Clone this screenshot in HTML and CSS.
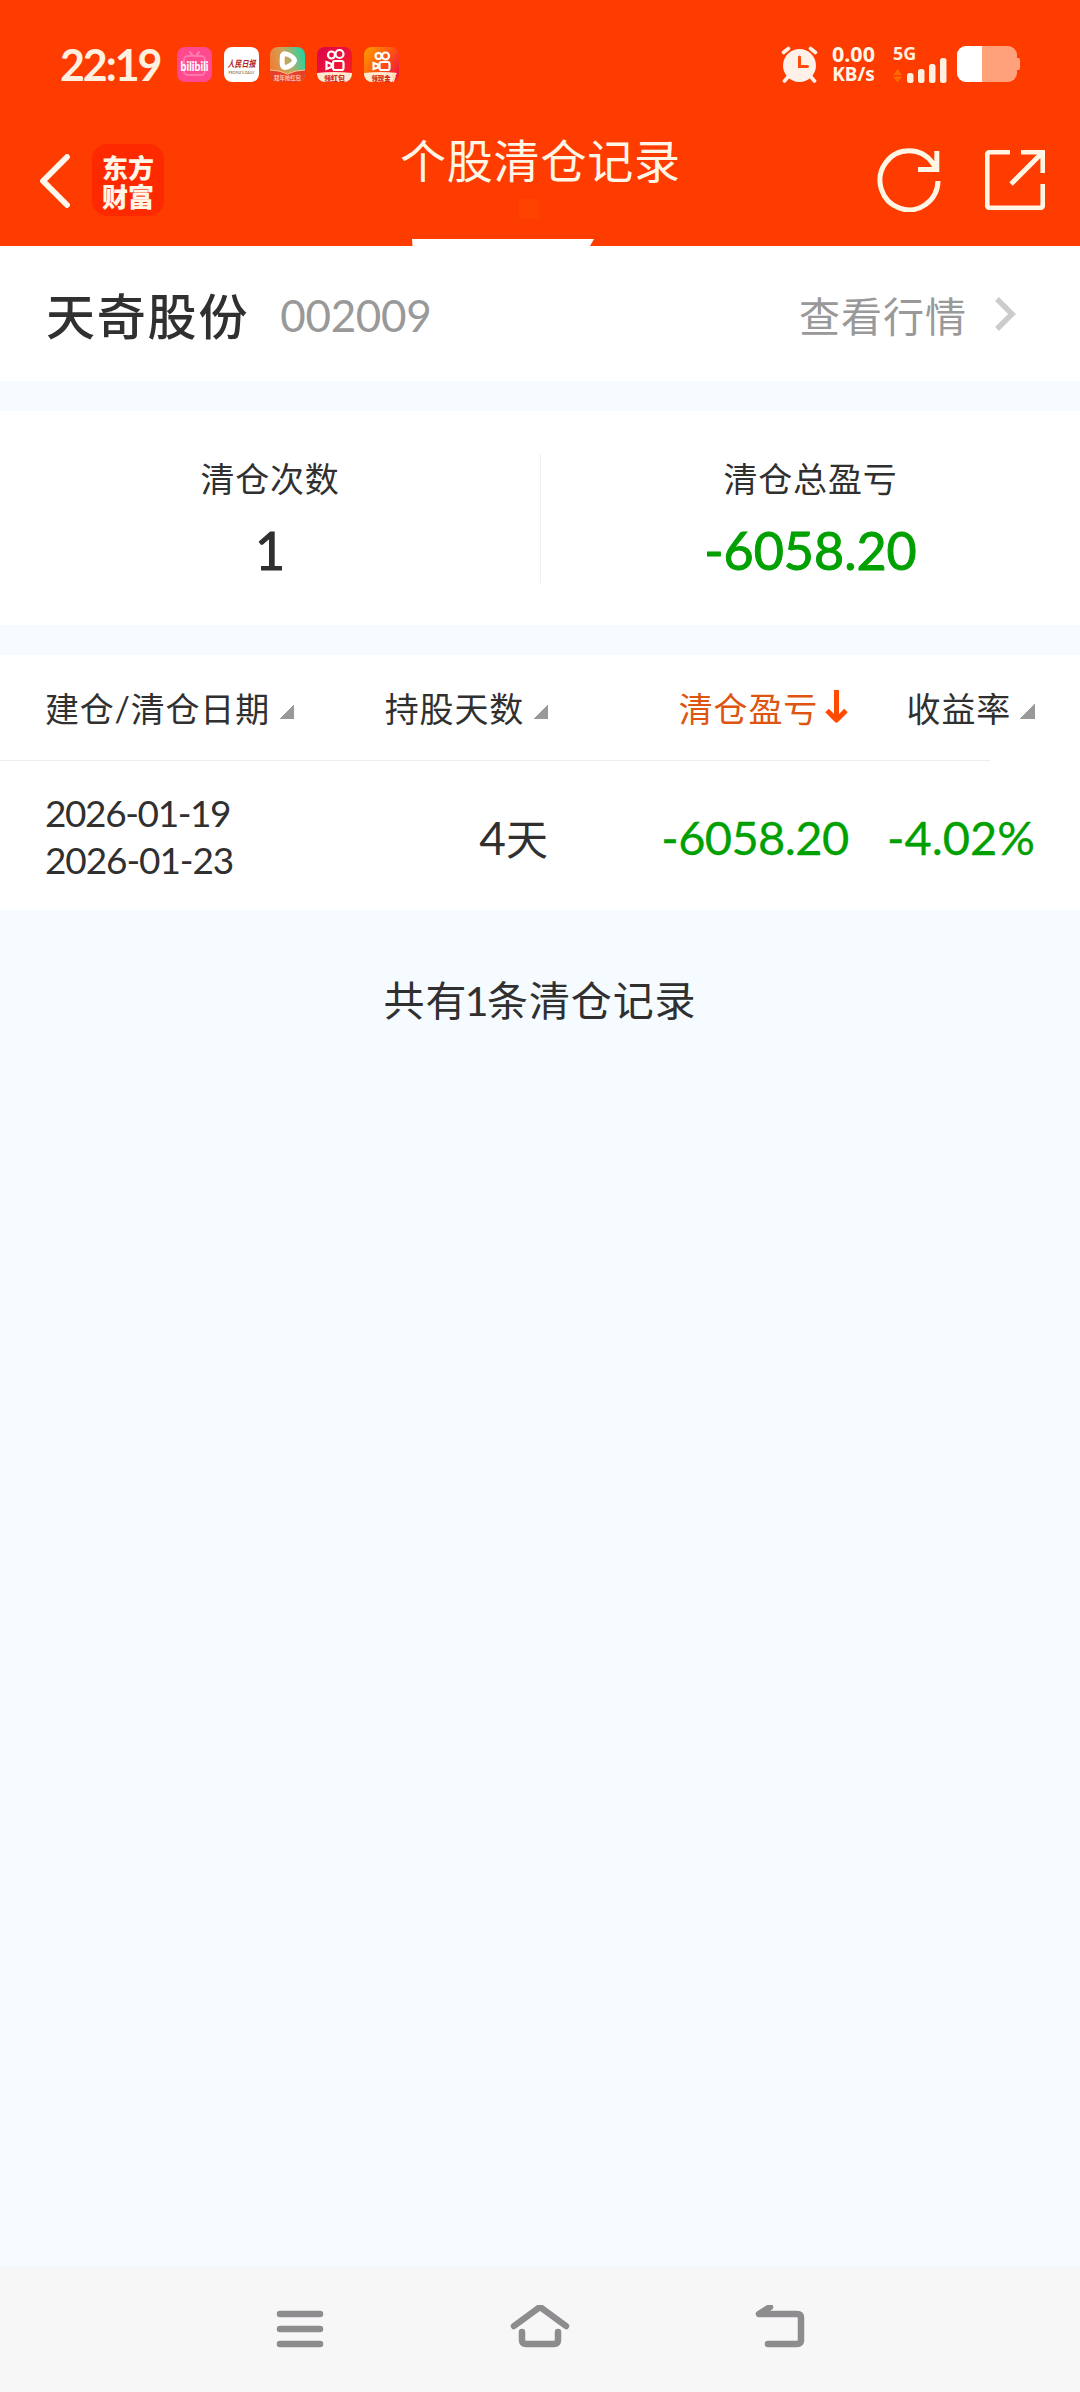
FILE: index.html
```html
<!DOCTYPE html>
<html lang="zh-CN">
<head>
<meta charset="utf-8">
<title>个股清仓记录</title>
<link rel="stylesheet" href="styles.css">
</head>
<body>
<div class="screen">
  <header class="top">
    <div class="status">
      <span class="clock">22:19</span>
      <div class="apps">
        <svg class="app" viewBox="0 0 35 35">
          <rect width="35" height="35" rx="8" fill="#ff4a90"/>
          <path d="M13 5l3 4M22 5l-3 4" stroke="#ff86b4" stroke-width="2" stroke-linecap="round"/>
          <rect x="7" y="9" width="21" height="19" rx="4" fill="none" stroke="#ff78ac" stroke-width="2"/>
          <text x="17.500" y="23.500" class="bili" textLength="28" lengthAdjust="spacingAndGlyphs">bilibili</text>
        </svg>
        <svg class="app" viewBox="0 0 35 35">
          <rect width="35" height="35" rx="8" fill="#fff"/>
          <text x="17.500" y="20" class="brush" textLength="28" lengthAdjust="spacingAndGlyphs">人民日报</text>
          <text x="17.500" y="26.500" class="brush-sub" textLength="26" lengthAdjust="spacingAndGlyphs">PEOPLE'S DAILY</text>
        </svg>
        <svg class="app" viewBox="0 0 35 35">
          <defs><linearGradient id="g1" x1="0" y1=".6" x2="1" y2=".3"><stop offset="0" stop-color="#f47a32"/><stop offset=".5" stop-color="#c5a860"/><stop offset="1" stop-color="#25d3a4"/></linearGradient></defs>
          <rect width="35" height="35" rx="8" fill="url(#g1)"/>
          <path d="M0 23q9 0 17.500 4Q26 23 35 23v4a8 8 0 0 1-8 8H8a8 8 0 0 1-8-8z" fill="#e5402b"/>
          <path d="M0 23q9 0 17.500 4Q26 23 35 23" fill="none" stroke="#ffc78c"/>
          <path d="M12.500 8.500q1-2.500 4-1.500 7 2.500 8 6 0 3-5 6-5 2.500-6.500.5-1.500-3-.5-11z" fill="none" stroke="#fff" stroke-width="5" stroke-linejoin="round"/>
          <text x="17.500" y="33" class="tag tag-pale" textLength="27" lengthAdjust="spacingAndGlyphs">拜年抢红包</text>
        </svg>
        <svg class="app" viewBox="0 0 35 35">
          <defs><linearGradient id="g2" x1="0" y1="0" x2="1" y2="1"><stop offset="0" stop-color="#d8064c"/><stop offset="1" stop-color="#ff2025"/></linearGradient></defs>
          <rect width="35" height="35" rx="8" fill="url(#g2)"/>
          <path d="M0 26q17-2 35 0v1a8 8 0 0 1-8 8H8a8 8 0 0 1-8-8z" fill="#ffe9cf"/>
          <g fill="none" stroke="#fff" stroke-width="2.200"><circle cx="14.500" cy="8" r="3.500"/><circle cx="22.500" cy="7" r="4"/><rect x="16" y="14" width="10.500" height="9" rx="2"/><path d="M9.500 15l5 2v3l-5 2z"/></g>
          <text x="17.500" y="33.500" class="tag" textLength="21" lengthAdjust="spacingAndGlyphs">领红包</text>
        </svg>
        <svg class="app" viewBox="0 0 35 35">
          <defs><linearGradient id="g3" x1="0" y1="0" x2="1" y2=".7"><stop offset="0" stop-color="#ffa000"/><stop offset=".6" stop-color="#ff5212"/><stop offset="1" stop-color="#ee1b3a"/></linearGradient></defs>
          <rect width="35" height="35" rx="8" fill="url(#g3)"/>
          <path d="M0 26q17-2 33 0l-5 9H8a8 8 0 0 1-8-8z" fill="#ffe9cf"/>
          <path d="M31 26l-3 4h3l-2 5" fill="none" stroke="#ffd9a0" stroke-width="1.500"/>
          <g fill="none" stroke="#fff" stroke-width="2.200"><circle cx="14.500" cy="9" r="3"/><circle cx="21.500" cy="9" r="3.500"/><rect x="15.500" y="15" width="10" height="8" rx="2"/><path d="M9.500 16l4.500 1.500v3L9.500 22z"/></g>
          <text x="17" y="33.500" class="tag" textLength="19" lengthAdjust="spacingAndGlyphs">领现金</text>
        </svg>
      </div>
      <svg class="alarm" viewBox="0 0 37 37">
        <g fill="none" stroke="#fff0e8" stroke-width="3.600" stroke-linecap="round"><path d="M2.500 6.500l5-4M34.500 6.500l-5-4M7 31l-3.500 4M30 31l3.500 4"/></g>
        <circle cx="18.500" cy="19.500" r="16.500" fill="#fff0e8"/>
        <path d="M18.500 11v9.500h8" fill="none" stroke="#ff4a0c" stroke-width="3" stroke-linecap="round"/>
      </svg>
      <div class="speed"><span>0.00</span><span class="unit">KB/s</span></div>
      <div class="network">
        <span>5G</span>
        <svg viewBox="0 0 55 26" width="55" height="26">
          <path d="M0 18l4.500-6 4.500 6zM0 19.500l4.500 6 4.500-6z" fill="#ff6a00"/>
          <g fill="#fff0e2"><rect x="14" y="16" width="6.500" height="10" rx="2.500"/><rect x="25" y="12" width="6.500" height="14" rx="2.500"/><rect x="36" y="7" width="6.500" height="19" rx="2.500"/><rect x="47" y="1" width="6.500" height="25" rx="2.500"/></g>
        </svg>
      </div>
      <svg class="battery" viewBox="0 0 63 36">
        <rect width="60" height="36" rx="9" fill="#ffa27b"/><path d="M60 12h1.500q1.500 0 1.500 2v8q0 2-1.500 2H60z" fill="#ffa27b"/>
        <path d="M9 0h16v36H9a9 9 0 0 1-9-9V9a9 9 0 0 1 9-9z" fill="#fff"/>
      </svg>
    </div>
    <div class="nav">
      <svg class="back" viewBox="0 0 30 54"><path d="M27 3L3 27l24 24" fill="none" stroke="#fff8ee" stroke-width="5.800" stroke-linecap="round" stroke-linejoin="round"/></svg>
      <div class="logo"><span>东方</span><span>财富</span></div>
      <h1 class="title">个股清仓记录<i class="spot"></i><svg class="tab" viewBox="0 0 182 7"><path d="M0 0h182l-4 7H.5z" fill="#fff"/></svg></h1>
      <svg class="refresh" viewBox="0 0 64 64"><path d="M61 33A29 29.500 0 1 1 55.500 15L60 21.500M59.800 3v18.500H41" fill="none" stroke="#fff6e6" stroke-width="5"/></svg>
      <svg class="export" viewBox="0 0 60 60"><g fill="none" stroke="#fff6e6" stroke-width="4.800"><path d="M25 2.200H5q-2.800 0-2.800 2.800v50q0 2.800 2.800 2.800h50q2.800 0 2.800-2.800V34"/><path d="M36 2.200h21.800V23M57 3L26 34"/></g></svg>
    </div>
  </header>

  <section class="stock">
    <span class="name">天奇股份</span><span class="code">002009</span>
    <span class="quote">查看行情</span>
    <svg class="more" viewBox="0 0 21 34"><path d="M2 2l15 15L2 32" fill="none" stroke="#ccc" stroke-width="5.500"/></svg>
  </section>

  <section class="summary">
    <div class="cell"><span class="label">清仓次数</span><span class="value">1</span></div>
    <div class="cell split"><span class="label">清仓总盈亏</span><span class="value total">-6058.20</span></div>
  </section>

  <section class="table">
    <div class="grid head">
      <span class="sort first">建仓/清仓日期<i class="tri"></i></span>
      <span class="sort">持股天数<i class="tri"></i></span>
      <span class="sort active">清仓盈亏<svg class="down" viewBox="0 0 23 34"><path d="M11.500 0v29M2 20.500l9.500 9.500 9.500-9.500" fill="none" stroke="#ff4b00" stroke-width="5" stroke-linejoin="round"/></svg></span>
      <span class="sort">收益率<i class="tri"></i></span>
    </div>
    <div class="rule"></div>
    <div class="grid row">
      <div class="dates"><span class="open">2026-01-19</span><span>2026-01-23</span></div>
      <span class="days"><b>4</b>天</span>
      <span class="num">-6058.20</span>
      <span class="num rate">-4.02%</span>
    </div>
  </section>

  <p class="count">共有<span class="one">1</span>条清仓记录</p>

  <footer class="keys">
    <svg viewBox="0 0 60 48"><path d="M10 9h40M10 24h40M10 39h40"/></svg>
    <svg viewBox="0 0 60 48"><path d="M4 21L30 2l26 19M12 27v8q0 4 4 4h28q4 0 4-4v-8"/></svg>
    <svg viewBox="0 0 60 48"><path d="M20 2L9 9h38q4 0 4 4v22q0 4-4 4H18"/></svg>
  </footer>
</div>
</body>
</html>
```
FILE: styles.css
```css
* { box-sizing: border-box; }
body { margin: 0; }
svg { display: block; flex: none; }
.screen {
  width: 1080px; height: 2392px;
  display: flex; flex-direction: column;
  background: #f5fbff; color: #303030;
  font-family: Lato, "Noto Sans CJK SC", sans-serif;
  overflow: hidden; white-space: nowrap;
}
.top { height: 246px; background: #ff3c00; color: #fff6e8; flex: none; }
.status { height: 128px; padding: 0 60px; display: flex; align-items: center; }
.clock { width: 117px; padding-top: 2px; font-size: 43px; font-weight: 700; line-height: 48px; letter-spacing: -2.100px; color: #fff0e0; }
.apps { display: flex; gap: 11.700px; margin-right: auto; }
.app { width: 35px; height: 35px; }
.bili { font: 900 13px Lato, sans-serif; fill: #fff; text-anchor: middle; }
.brush { font: italic 700 9px "Noto Sans CJK SC", sans-serif; fill: #b22329; text-anchor: middle; }
.brush-sub { font: 700 3.500px Lato, sans-serif; fill: #a08258; text-anchor: middle; }
.tag { font: 900 7px "Noto Sans CJK SC", sans-serif; fill: #d22816; text-anchor: middle; }
.tag-pale { font-size: 6px; fill: #ffb39a; }
.alarm { width: 37px; height: 37px; margin-right: 12px; }
.speed { width: 47px; height: 40px; margin-right: 16px; display: flex; flex-direction: column; align-items: center; font: 700 21.500px/20px "Noto Sans", sans-serif; }
.speed .unit { font-size: 19px; line-height: 20px; }
.network { width: 55px; height: 38px; margin-right: 9px; display: flex; flex-direction: column; font: 700 18px/12px "Noto Sans", sans-serif; color: #ffeedd; }
.network span { padding-top: 2px; margin-bottom: -2px; }
.battery { width: 63px; height: 36px; }

.nav { height: 118px; padding: 0 35px 0 40px; display: flex; align-items: flex-start; }
.back { width: 30px; height: 54px; margin-top: 26px; }
.logo { width: 72px; height: 72px; margin: 16px 0 0 22px; padding-top: 8px; border-radius: 15px; background: #ff2900; display: flex; flex-direction: column; align-items: center; font: 900 26px/29px "Noto Sans CJK SC", sans-serif; }
.title { position: relative; margin: 0 0 0 236px; width: 280px; height: 118px; font-size: 46px; line-height: 66px; font-weight: 400; letter-spacing: .8px; }
.spot { position: absolute; left: 119px; top: 71px; width: 20px; height: 20px; background: #ff4200; }
.tab { position: absolute; left: 12px; top: 111px; width: 182px; height: 7px; }
.refresh { width: 64px; height: 64px; margin: 20px 44px 0 auto; }
.export { width: 60px; height: 60px; margin-top: 22px; }

.stock { height: 135px; background: #fff; display: flex; align-items: center; padding: 0 64px 0 46px; flex: none; }
.name { font-size: 49px; font-weight: 500; letter-spacing: 1.800px; }
.code { margin-left: 31px; padding-top: 2px; font-size: 44px; letter-spacing: -.3px; color: #999; }
.quote { margin-left: auto; font-size: 41px; letter-spacing: 1px; color: #999; }
.more { width: 21px; height: 34px; margin-left: 28px; }

.summary { margin-top: 30px; height: 214px; background: #fff; display: grid; grid-template-columns: 1fr 1fr; align-items: center; flex: none; }
.cell { height: 129px; display: flex; flex-direction: column; align-items: center; }
.split { border-left: 1px solid #eee; }
.label { font-size: 34px; line-height: 50px; letter-spacing: .8px; }
.value { margin-top: 14px; font-size: 52px; line-height: 64px; -webkit-text-stroke: 1px currentColor; }
.total, .num { color: #00a000; }

.table { margin-top: 30px; height: 255px; background: #fff; flex: none; }
.grid { display: grid; grid-template-columns: 251px 252px 300px 187px; padding-left: 45px; align-items: center; justify-items: end; }
.head { height: 105px; padding-top: 2px; font-size: 34px; line-height: 50px; letter-spacing: .8px; }
.sort { display: flex; align-items: center; }
.first { justify-self: start; }
.active { color: #dd5510; }
.tri { width: 15px; height: 15px; margin: 5px 0 0 9px; background: linear-gradient(135deg, transparent 50%, #999 50%); }
.down { width: 23px; height: 34px; margin: -4px 0 0 7px; }
.rule { width: 990px; height: 1px; background: #eee; }
.row { height: 149px; padding-top: 2px; }
.dates { justify-self: start; display: flex; flex-direction: column; font-size: 37px; line-height: 47px; letter-spacing: -1.100px; margin-top: -2px; }
.open { letter-spacing: -1.400px; }
.days { font-size: 42px; }
.days b { font-size: 46px; font-weight: 400; }
.num { font-size: 47px; letter-spacing: -.6px; margin-right: -.6px; -webkit-text-stroke: .3px currentColor; }
.rate { letter-spacing: 0; margin-right: 0; }

.count { margin: 61px 0 0; text-align: center; font-size: 41px; line-height: 60px; letter-spacing: .9px; }
.one { margin: 0 -2.500px; }
.keys { margin-top: auto; height: 126px; background: #f7f7f7; display: flex; justify-content: center; gap: 180px; padding-top: 39px; flex: none; }
.keys svg { width: 60px; height: 48px; fill: none; stroke: #8e8c8e; stroke-width: 6.500; stroke-linecap: round; stroke-linejoin: round; }
```
